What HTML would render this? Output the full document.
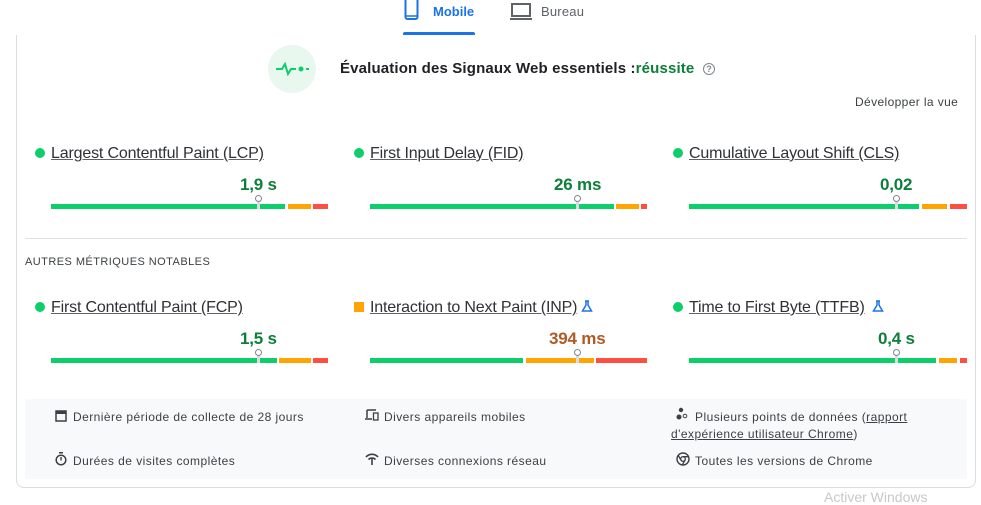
<!DOCTYPE html>
<html><head><meta charset="utf-8"><style>
*{margin:0;padding:0;box-sizing:border-box}
body{width:981px;height:494px;background:#fff;font-family:"Liberation Sans",sans-serif;color:#202124;position:relative;overflow:hidden}
.a{position:absolute;white-space:nowrap}
.card{position:absolute;left:16px;top:35px;width:960px;height:453px;border:1px solid #dadce0;border-top:none;border-radius:0 0 8px 8px}
.t{font-size:16px;color:#303134;text-decoration:underline;text-decoration-color:#5f6368;letter-spacing:-0.17px}
.v{font-size:17px;font-weight:bold;color:#0d7f3a;letter-spacing:-0.2px}
.dot{position:absolute;width:10px;height:10px;border-radius:50%;background:#0cce6b}
.seg{position:absolute;height:5px}
.g{background:#0cce6b}.o{background:#ffa400}.r{background:#ff4e42}
.pin{position:absolute;width:3px;height:8px;background:#dadce0}
.pin:before{content:"";position:absolute;left:-2px;top:-6px;width:5px;height:5px;border:1px solid #80868b;border-radius:50%;background:#fff}
.f{font-size:12px;color:#3c4043;letter-spacing:0.45px}
</style></head><body>
<svg class="a" style="left:404px;top:0" width="16" height="21" viewBox="0 0 16 21"><rect x="1.5" y="-2" width="12" height="21" rx="2" fill="none" stroke="#1a73e8" stroke-width="2"/><line x1="2" y1="16" x2="13" y2="16" stroke="#1a73e8" stroke-width="1.5"/></svg>
<div class="a" style="left:433px;top:4px;font-size:13px;color:#1a73e8;font-weight:bold">Mobile</div>
<div class="a" style="left:403px;top:32px;width:72px;height:3px;background:#1a73e8;border-radius:2px 2px 0 0"></div>
<svg class="a" style="left:510px;top:3px" width="22" height="18" viewBox="0 0 22 18"><rect x="2" y="1" width="18" height="12" fill="none" stroke="#5f6368" stroke-width="2"/><rect x="0" y="15" width="22" height="2" fill="#5f6368"/></svg>
<div class="a" style="left:541px;top:4px;font-size:13px;color:#5f6368;letter-spacing:0.2px">Bureau</div>
<div class="card"></div>
<div class="a" style="left:268px;top:45px;width:48px;height:48px;border-radius:50%;background:#e8f8ef"></div>
<svg class="a" style="left:274px;top:62px" width="38" height="14" viewBox="0 0 38 14"><path d="M2 7h6l3-5 3 10 3-5h5" fill="none" stroke="#0cce6b" stroke-width="2"/><circle cx="27" cy="7" r="2.5" fill="#0cce6b"/><line x1="32" y1="7" x2="35" y2="7" stroke="#0cce6b" stroke-width="2"/></svg>
<div class="a" style="left:340px;top:60px;font-size:15px;font-weight:bold;color:#202124;letter-spacing:0.15px">Évaluation des Signaux Web essentiels :<span style="color:#0d7f3a">réussite</span></div>
<div class="a" style="left:703px;top:63px;width:12px;height:12px;border:1.5px solid #80868b;border-radius:50%;font-size:9px;color:#80868b;text-align:center;line-height:10px;font-weight:bold">?</div>
<div class="a" style="left:855px;top:95px;font-size:12px;color:#3c4043;letter-spacing:0.38px">Développer la vue</div>
<div class="dot" style="left:35px;top:148px"></div><div class="a t" style="left:51px;top:145px">Largest Contentful Paint (LCP)</div>
<div class="dot" style="left:354px;top:148px"></div><div class="a t" style="left:370px;top:145px">First Input Delay (FID)</div>
<div class="dot" style="left:673px;top:148px"></div><div class="a t" style="left:689px;top:145px">Cumulative Layout Shift (CLS)</div>
<div class="a v" style="left:240px;top:175px">1,9 s</div>
<div class="a v" style="left:554px;top:175px">26 ms</div>
<div class="a v" style="left:880px;top:175px">0,02</div>
<div class="seg g" style="left:51px;top:204px;width:234px"></div><div class="seg o" style="left:288px;top:204px;width:23px"></div><div class="seg r" style="left:313px;top:204px;width:15px"></div><div class="pin" style="left:257px;top:201px"></div>
<div class="seg g" style="left:370px;top:204px;width:244px"></div><div class="seg o" style="left:616px;top:204px;width:23px"></div><div class="seg r" style="left:641px;top:204px;width:6px"></div><div class="pin" style="left:576px;top:201px"></div>
<div class="seg g" style="left:689px;top:204px;width:230px"></div><div class="seg o" style="left:922px;top:204px;width:25px"></div><div class="seg r" style="left:950px;top:204px;width:17px"></div><div class="pin" style="left:895px;top:201px"></div>
<div class="a" style="left:25px;top:238px;width:942px;height:1px;background:#e0e0e0"></div>
<div class="a" style="left:25px;top:256px;font-size:11px;color:#3c4043;letter-spacing:0.45px">AUTRES MÉTRIQUES NOTABLES</div>
<div class="dot" style="left:35px;top:302px"></div><div class="a t" style="left:51px;top:299px">First Contentful Paint (FCP)</div>
<div class="a" style="left:354px;top:302px;width:10px;height:10px;background:#ffa400"></div><div class="a t" style="left:370px;top:299px">Interaction to Next Paint (INP)</div>
<svg class="a" style="left:581px;top:300px" width="12" height="12" viewBox="0 0 12 12"><path d="M4 1h4M5 1v4L1.5 11h9L7 5V1" fill="none" stroke="#1a73e8" stroke-width="1.5"/></svg>
<div class="dot" style="left:673px;top:302px"></div><div class="a t" style="left:689px;top:299px">Time to First Byte (TTFB)</div>
<svg class="a" style="left:872px;top:300px" width="12" height="12" viewBox="0 0 12 12"><path d="M4 1h4M5 1v4L1.5 11h9L7 5V1" fill="none" stroke="#1a73e8" stroke-width="1.5"/></svg>
<div class="a v" style="left:240px;top:329px">1,5 s</div>
<div class="a v" style="left:549px;top:329px;color:#b05a26">394 ms</div>
<div class="a v" style="left:878px;top:329px">0,4 s</div>
<div class="seg g" style="left:51px;top:358px;width:226px"></div><div class="seg o" style="left:279px;top:358px;width:32px"></div><div class="seg r" style="left:313px;top:358px;width:15px"></div><div class="pin" style="left:257px;top:355px"></div>
<div class="seg g" style="left:370px;top:358px;width:153px"></div><div class="seg o" style="left:526px;top:358px;width:68px"></div><div class="seg r" style="left:596px;top:358px;width:51px"></div><div class="pin" style="left:576px;top:355px"></div>
<div class="seg g" style="left:689px;top:358px;width:247px"></div><div class="seg o" style="left:939px;top:358px;width:18px"></div><div class="seg r" style="left:960px;top:358px;width:7px"></div><div class="pin" style="left:895px;top:355px"></div>
<div class="a" style="left:25px;top:399px;width:942px;height:80px;background:#f8f9fa;border-radius:2px"></div>
<svg class="a" style="left:55px;top:409px" width="12" height="13" viewBox="0 0 12 13"><rect x="1" y="2" width="10" height="10" fill="none" stroke="#3c4043" stroke-width="1.5"/><rect x="1" y="2" width="10" height="3" fill="#3c4043"/></svg>
<div class="a f" style="left:73px;top:410px">Dernière période de collecte de 28 jours</div>
<svg class="a" style="left:365px;top:409px" width="14" height="12" viewBox="0 0 14 12"><path d="M2 1h9M2 1v8M0 10h7" fill="none" stroke="#3c4043" stroke-width="1.5"/><rect x="8.5" y="4" width="4.5" height="7" fill="none" stroke="#3c4043" stroke-width="1.3"/></svg>
<div class="a f" style="left:384px;top:410px">Divers appareils mobiles</div>
<svg class="a" style="left:676px;top:407px" width="12" height="14" viewBox="0 0 12 14"><circle cx="5" cy="3" r="2.2" fill="#3c4043"/><circle cx="3" cy="10" r="2.5" fill="#3c4043"/><circle cx="9" cy="9" r="1.8" fill="none" stroke="#3c4043"/></svg>
<div class="a f" style="left:695px;top:410px">Plusieurs points de données (<u>rapport</u></div>
<div class="a f" style="left:671px;top:427px"><u>d'expérience utilisateur Chrome</u>)</div>
<svg class="a" style="left:55px;top:452px" width="12" height="14" viewBox="0 0 12 14"><rect x="4" y="0" width="4" height="1.5" fill="#3c4043"/><circle cx="6" cy="8" r="4.8" fill="none" stroke="#3c4043" stroke-width="1.5"/><line x1="6" y1="5" x2="6" y2="8.5" stroke="#3c4043" stroke-width="1.4"/></svg>
<div class="a f" style="left:73px;top:454px">Durées de visites complètes</div>
<svg class="a" style="left:365px;top:453px" width="14" height="12" viewBox="0 0 14 12"><path d="M1 4a8 8 0 0 1 12 0M3.5 6.5a5 5 0 0 1 7 0" fill="none" stroke="#3c4043" stroke-width="1.6"/><line x1="7" y1="5" x2="7" y2="12" stroke="#3c4043" stroke-width="1.6"/></svg>
<div class="a f" style="left:384px;top:454px">Diverses connexions réseau</div>
<svg class="a" style="left:676px;top:452px" width="14" height="14" viewBox="0 0 14 14"><circle cx="7" cy="7" r="6" fill="none" stroke="#3c4043" stroke-width="1.4"/><circle cx="7" cy="7" r="2.3" fill="none" stroke="#3c4043" stroke-width="1.3"/><path d="M7 4.7h5.5M5 8.2L2.3 3.5M9 8.2L6.3 12.8" stroke="#3c4043" stroke-width="1.3"/></svg>
<div class="a f" style="left:695px;top:454px">Toutes les versions de Chrome</div>
<div class="a" style="left:824px;top:489px;font-size:14px;color:#c8c8c8">Activer Windows</div>
</body></html>
